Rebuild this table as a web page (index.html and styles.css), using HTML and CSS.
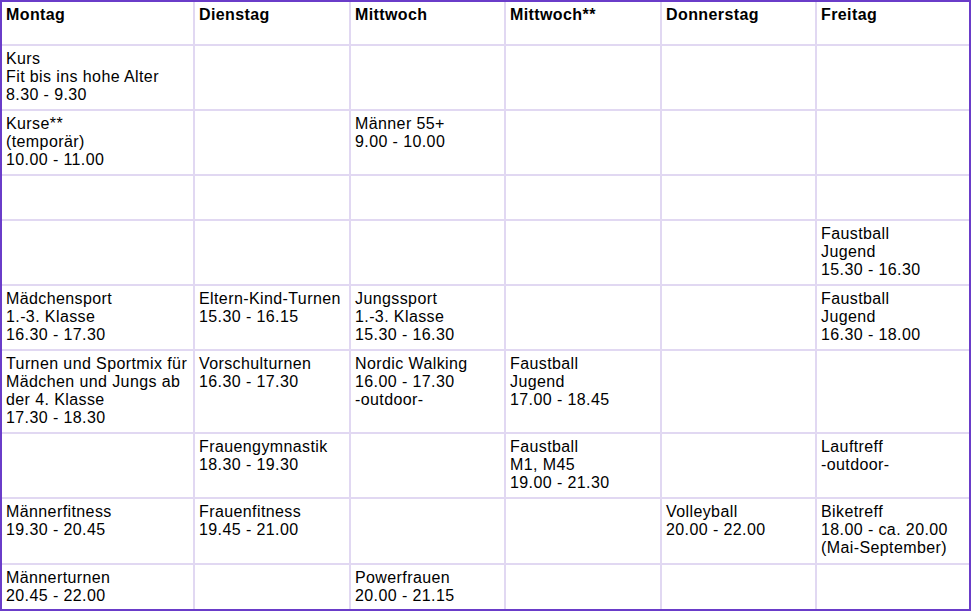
FILE: index.html
```html
<!DOCTYPE html>
<html lang="de">
<head>
<meta charset="utf-8">
<title>Kursplan</title>
<link rel="stylesheet" href="styles.css">
</head>
<body>
<div class="plan">
  <div class="cell head">Montag</div>
  <div class="cell head">Dienstag</div>
  <div class="cell head">Mittwoch</div>
  <div class="cell head">Mittwoch**</div>
  <div class="cell head">Donnerstag</div>
  <div class="cell head">Freitag</div>

  <div class="cell">Kurs<br>Fit bis ins hohe Alter<br>8.30 - 9.30</div>
  <div class="cell"></div>
  <div class="cell"></div>
  <div class="cell"></div>
  <div class="cell"></div>
  <div class="cell"></div>

  <div class="cell">Kurse**<br>(temporär)<br>10.00 - 11.00</div>
  <div class="cell"></div>
  <div class="cell">Männer 55+<br>9.00 - 10.00</div>
  <div class="cell"></div>
  <div class="cell"></div>
  <div class="cell"></div>

  <div class="cell"></div>
  <div class="cell"></div>
  <div class="cell"></div>
  <div class="cell"></div>
  <div class="cell"></div>
  <div class="cell"></div>

  <div class="cell"></div>
  <div class="cell"></div>
  <div class="cell"></div>
  <div class="cell"></div>
  <div class="cell"></div>
  <div class="cell">Faustball<br>Jugend<br>15.30 - 16.30</div>

  <div class="cell">Mädchensport<br>1.-3. Klasse<br>16.30 - 17.30</div>
  <div class="cell">Eltern-Kind-Turnen<br>15.30 - 16.15</div>
  <div class="cell">Jungssport<br>1.-3. Klasse<br>15.30 - 16.30</div>
  <div class="cell"></div>
  <div class="cell"></div>
  <div class="cell">Faustball<br>Jugend<br>16.30 - 18.00</div>

  <div class="cell">Turnen und Sportmix für<br>Mädchen und Jungs ab<br>der 4. Klasse<br>17.30 - 18.30</div>
  <div class="cell">Vorschulturnen<br>16.30 - 17.30</div>
  <div class="cell">Nordic Walking<br>16.00 - 17.30<br>-outdoor-</div>
  <div class="cell">Faustball<br>Jugend<br>17.00 - 18.45</div>
  <div class="cell"></div>
  <div class="cell"></div>

  <div class="cell"></div>
  <div class="cell">Frauengymnastik<br>18.30 - 19.30</div>
  <div class="cell"></div>
  <div class="cell">Faustball<br>M1, M45<br>19.00 - 21.30</div>
  <div class="cell"></div>
  <div class="cell">Lauftreff<br>-outdoor-</div>

  <div class="cell">Männerfitness<br>19.30 - 20.45</div>
  <div class="cell">Frauenfitness<br>19.45 - 21.00</div>
  <div class="cell"></div>
  <div class="cell"></div>
  <div class="cell">Volleyball<br>20.00 - 22.00</div>
  <div class="cell">Biketreff<br>18.00 - ca. 20.00<br>(Mai-September)</div>

  <div class="cell">Männerturnen<br>20.45 - 22.00</div>
  <div class="cell"></div>
  <div class="cell">Powerfrauen<br>20.00 - 21.15</div>
  <div class="cell"></div>
  <div class="cell"></div>
  <div class="cell"></div>
</div>
</body>
</html>
```

FILE: styles.css
```css
html, body {
  margin: 0;
  padding: 0;
  background: #ffffff;
}

.plan {
  display: grid;
  grid-template-columns: 191px 154px 153px 154px 153px 152px;
  grid-template-rows: 42px 63px 63px 43px 63px 63px 81px 63px 64px 44px;
  gap: 2px;
  width: 967px;
  border: 2px solid #6a3cc9;
  background: #e1d8f2;
  font-family: "Liberation Sans", Arial, sans-serif;
  font-size: 16px;
  line-height: 18px;
  letter-spacing: 0.4px;
  color: #000000;
}

.cell {
  background: #ffffff;
  padding: 4px 4px 2px;
  overflow: hidden;
}

.head {
  font-weight: bold;
}
```
